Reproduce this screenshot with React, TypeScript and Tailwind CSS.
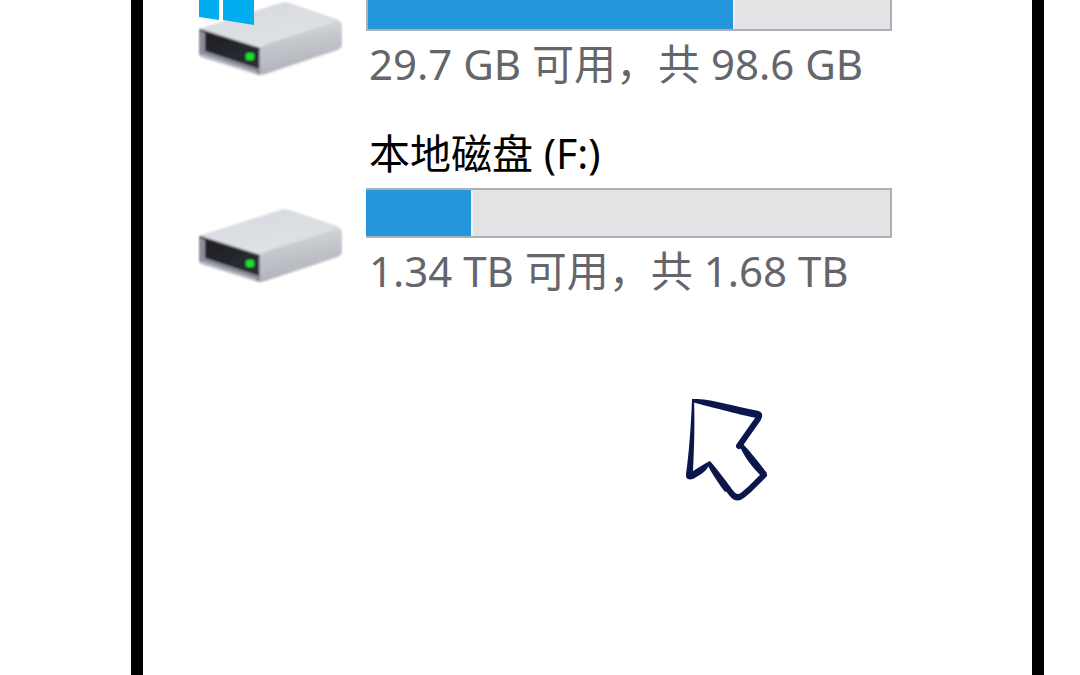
import React from "react";

type Drive = {
  name?: string;
  usage: string;
  fill: number;
  system?: boolean;
};

const drives: Drive[] = [
  { usage: "29.7 GB 可用，共 98.6 GB", fill: 70, system: true },
  { name: "本地磁盘 (F:)", usage: "1.34 TB 可用，共 1.68 TB", fill: 20 },
];

function DriveIcon({ id, system }: { id: string; system?: boolean }) {
  return (
    <svg viewBox="0 0 145 77" className="block w-full" aria-hidden="true">
      <defs>
        <linearGradient id={`${id}-top`} x1="0" y1="0" x2="0.5" y2="1">
          <stop offset="0" stopColor="#d6d9dd" />
          <stop offset="1" stopColor="#dfe2e7" />
        </linearGradient>
        <linearGradient id={`${id}-side`} x1="0" y1="0" x2="0.25" y2="1">
          <stop offset="0" stopColor="#dcdfe4" />
          <stop offset="0.45" stopColor="#c5c7cd" />
          <stop offset="1" stopColor="#b0b2b9" />
        </linearGradient>
        <linearGradient id={`${id}-slot`} x1="0" y1="0" x2="1" y2="1">
          <stop offset="0" stopColor="#1d1f23" />
          <stop offset="1" stopColor="#2d3035" />
        </linearGradient>
        <filter id={`${id}-soft`} x="-5%" y="-5%" width="110%" height="110%">
          <feGaussianBlur stdDeviation="0.9" />
        </filter>
      </defs>
      <g filter={`url(#${id}-soft)`}>
        <path d="M1 29 L80 4 Q87 1 94 4 L140 20 Q144 22 144 26 L144 44 Q144 48 139 50 L67 74 Q62 76 57 74 L4 57 Q1 56 1 52 Z" fill="#c8cad0" />
        <path d="M1 29 L80 4 Q87 1 94 4 L144 23 L68 46 L62 50 Z" fill={`url(#${id}-top)`} />
        <path d="M62 50 Q63 46 69 44 L137 22 Q144 21 144 27 L144 44 Q144 48 139 50 L67 74 L62 75 Z" fill={`url(#${id}-side)`} />
        <path d="M1 29 L62 48 L62 75 L4 57 Q1 56 1 52 Z" fill="#8b8e99" />
        <path d="M2 30 L62 49" fill="none" stroke="#3c3f47" strokeWidth="2" />
        <path d="M7 32 L61 49 L61 69 L7 51 Z" fill={`url(#${id}-slot)`} />
        <path d="M3 55 L58 73" fill="none" stroke="#bcbfc8" strokeWidth="2" />
        <rect x="48" y="53" width="8" height="7" rx="2" fill="#19e82c" />
      </g>
      {system && (
        <g fill="#00aeef">
          <path d="M1 0 H21 V20 L1 17 Z" />
          <path d="M25 0 H56 V25 L25 20 Z" />
        </g>
      )}
    </svg>
  );
}

function Capacity({ drive }: { drive: Drive }) {
  return (
    <div
      role="progressbar"
      aria-label={drive.name ?? drive.usage}
      aria-valuenow={drive.fill}
      aria-valuemin={0}
      aria-valuemax={100}
      className={
        drive.name
          ? "h-[50px] border-2 border-l-0 border-[#afb0b5] bg-[#e2e3e5]"
          : "h-[31px] border-2 border-t-0 border-[#afb0b5] bg-[#e2e3e5]"
      }
    >
      <div
        className="box-content h-full border-r-2 border-[#f4eff0] bg-[#2497dc]"
        style={{ width: `${drive.fill}%` }}
      />
    </div>
  );
}

export default function App() {
  return (
    <div className="flex min-h-screen bg-white pl-[131px] pr-9 font-['Noto_Sans','Noto_Sans_CJK_SC',sans-serif]">
      <main className="flex-1 border-x-[12px] border-black pl-[55px] pr-[140px]">
        <ul className="flex flex-col gap-7">
          {drives.map((drive, i) => (
            <li key={drive.usage} className="flex items-end gap-[23px]">
              <div className="w-[145px] shrink-0 pb-5">
                <DriveIcon id={`drive-${i}`} system={drive.system} />
              </div>
              <div className="min-w-0 flex-1 whitespace-nowrap">
                {drive.name && (
                  <h2 className="mb-[7px] pl-[3px] text-[41px] leading-[56px] text-black">{drive.name}</h2>
                )}
                <Capacity drive={drive} />
                <p className="pl-[3px] text-[42px] leading-[66px] text-[#64666b]">{drive.usage}</p>
              </div>
            </li>
          ))}
        </ul>
        <svg
          viewBox="0 0 84 104"
          className="ml-[487px] mt-[95px] block w-[84px]"
          fill="#0b174b"
          stroke="#0b174b"
          strokeLinecap="round"
          strokeLinejoin="round"
          aria-hidden="true"
        >
          <path d="M7 0 C22 -1 48 7 74 12 L72 19 C56 16 46 13 34 10 C22 7 14 5 7 3 Z" stroke="none" />
          <path d="M72 15 Q76 15 73 20 L68 27 L54 47" fill="none" strokeWidth="6" />
          <path d="M58 45 C66 53 74 64 82 74 L77 78 C68 69 60 59 55 48 Z" stroke="none" />
          <path d="M79 76 Q72 83 65 90 L58 96 Q52 101 47 95 L43 90" fill="none" strokeWidth="6" />
          <path d="M25 62 C31 69 39 79 46 89 L40 93 C34 85 27 75 22 65 Z" stroke="none" />
          <path d="M25 62 C25 68 19 74 13 77 L8 80 Q0 82 1 75 C4 54 6 26 7 1 L9 1 C10 27 9 52 8 72 C14 69 18 65 25 62 Z" stroke="none" />
        </svg>
      </main>
    </div>
  );
}
